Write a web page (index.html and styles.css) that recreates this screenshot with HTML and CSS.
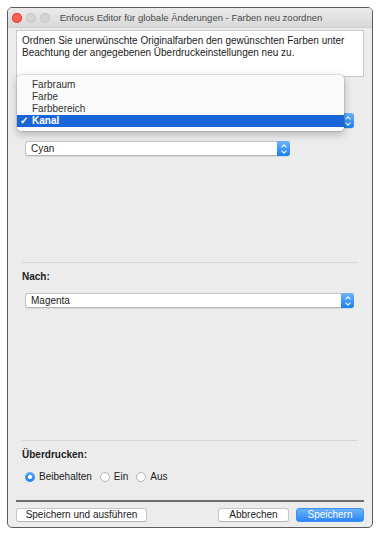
FILE: index.html
```html
<!DOCTYPE html>
<html lang="de">
<head>
  <meta charset="UTF-8" />
  <title>Farben neu zuordnen</title>
  <link rel="stylesheet" href="styles.css">
</head>
<body>
  <div class="window">
    <div class="titlebar">
      <div class="lights">
        <span class="light red"></span>
        <span class="light"></span>
        <span class="light"></span>
      </div>
      <div class="title">Enfocus Editor für globale Änderungen - Farben neu zoordnen</div>
    </div>

    <div class="content">
      <div class="desc">
        Ordnen Sie unerwünschte Originalfarben den gewünschten Farben unter
        Beachtung der angegebenen Überdruckeinstellungen neu zu.
      </div>

      <!-- label and current value sit under the open menu -->
      <div class="section from">
        <div class="label covered">Von:</div>
        <div class="popup wide"><span class="covered">Kanal</span><i class="arrows"></i></div>
        <div class="popup narrow"><span>Cyan</span><i class="arrows"></i></div>
      </div>

      <div class="section to">
        <div class="label">Nach:</div>
        <div class="popup wide"><span>Magenta</span><i class="arrows"></i></div>
      </div>

      <div class="section overprint">
        <div class="label">Überdrucken:</div>
        <div class="radios">
          <label class="radio checked"><i></i>Beibehalten</label>
          <label class="radio"><i></i>Ein</label>
          <label class="radio"><i></i>Aus</label>
        </div>
      </div>

      <div class="footer">
        <button class="btn">Speichern und ausführen</button>
        <div class="spacer"></div>
        <button class="btn cancel">Abbrechen</button>
        <button class="btn primary">Speichern</button>
      </div>
    </div>

    <ul class="menu">
      <li>Farbraum</li>
      <li>Farbe</li>
      <li>Farbbereich</li>
      <li class="selected">Kanal</li>
    </ul>
  </div>
</body>
</html>
```

FILE: styles.css
```css
* {
  box-sizing: border-box;
}
body {
  margin: 0;
  background: #fff;
  font-family: 'Liberation Sans', Arial, sans-serif;
  font-size: 10px;
  color: #222;
}
.window {
  position: relative;
  margin: 7px 0 0 7px;
  width: 366px;
  height: 521px;
  border: 1px solid #5c5c5c;
  border-radius: 5px;
  background: #ececec;
  overflow: hidden;
  display: flex;
  flex-direction: column;
}
.titlebar {
  height: 20px;
  flex: none;
  display: flex;
  align-items: center;
  background: linear-gradient(#ebebeb, #d8d8d8);
  border-bottom: 1px solid #d0d0d0;
}
.lights {
  display: flex;
  gap: 4px;
  padding-left: 4px;
  flex: none;
}
.light {
  width: 10px;
  height: 10px;
  border-radius: 50%;
  background: #d5d5d5;
  box-shadow: inset 0 0 0 1px #c6c6c6;
}
.light.red {
  background: #fc5f57;
  box-shadow: inset 0 0 0 1px #e0443e;
}
.title {
  flex: 1;
  text-align: center;
  font-size: 9.5px;
  white-space: nowrap;
  color: #4a4a4a;
  margin-right: 40px;
}
.content {
  flex: 1;
  display: flex;
  flex-direction: column;
  padding: 2px 8px 0;
}
.desc {
  height: 47px;
  flex: none;
  background: #fff;
  border: 1px solid #c9c9c9;
  padding: 4px 5px;
  line-height: 12px;
  color: #222;
}
.section {
  flex: none;
  display: flex;
  flex-direction: column;
}
.label {
  font-weight: bold;
  line-height: 12px;
}
.covered {
  visibility: hidden;
}
.from {
  height: 185px;
  padding-top: 12px;
}
.from .label {
  padding-left: 7px;
  margin-bottom: 12px;
}
.from .popup.narrow {
  margin-top: 13px;
}
.to {
  height: 178px;
  border-top: 1px solid #d8d8d8;
  margin: 0 6px;
  padding-top: 8px;
}
.to .popup {
  margin: 10px 4px 0 3px;
}
.overprint {
  height: 60px;
  border-top: 1px solid #d8d8d8;
  margin: 0 6px;
  padding-top: 8px;
}
.popup {
  height: 15px;
  background: #fff;
  border: 1px solid #c5c5c5;
  border-bottom-color: #b5b5b5;
  border-radius: 3px;
  display: flex;
  align-items: center;
  box-shadow: 0 0.5px 1px rgba(0, 0, 0, 0.08);
}
.popup span {
  flex: 1;
  padding-left: 5px;
}
.from .popup {
  margin-left: 9px;
}
.from .popup.wide {
  margin-right: 10px;
}
.popup.narrow {
  width: 265px;
}
.arrows {
  width: 13px;
  height: 15px;
  margin: -1px -1px -1px 0;
  border-radius: 0 3px 3px 0;
  background: linear-gradient(#6cb3fa, #1b7ff5);
  position: relative;
}
.arrows::before,
.arrows::after {
  content: "";
  position: absolute;
  left: 5px;
  width: 3px;
  height: 3px;
  border: solid #fff;
  border-width: 1px 0 0 1px;
}
.arrows::before {
  top: 3.5px;
  transform: rotate(45deg);
}
.arrows::after {
  top: 7.5px;
  transform: rotate(225deg);
}
.radios {
  display: flex;
  gap: 8px;
  margin-top: 10px;
  padding-left: 3px;
  line-height: 12px;
}
.radio {
  display: flex;
  align-items: center;
  gap: 4px;
}
.radio i {
  width: 10px;
  height: 10px;
  border-radius: 50%;
  background: #fff;
  border: 1px solid #b4b4b4;
}
.radio.checked i {
  border: none;
  background: radial-gradient(circle, #fff 0 1.8px, transparent 2.3px), linear-gradient(#5fa8f8, #1c7ff3);
}
.footer {
  flex: 1;
  border-top: 2px solid #6c6c6c;
  display: flex;
  align-items: flex-start;
  gap: 7px;
  padding-top: 6px;
}
.spacer {
  flex: 1;
}
.btn {
  font-family: inherit;
  font-size: 10px;
  height: 14px;
  padding: 0;
  background: #fff;
  border: 1px solid #c6c6c6;
  border-bottom-color: #b3b3b3;
  border-radius: 3px;
  color: #222;
  width: 131px;
  line-height: 12px;
}
.btn.cancel {
  width: 71px;
}
.btn.primary {
  width: 68px;
  color: #fff;
  border-color: #3c8ff5;
  background: linear-gradient(#6db2fa, #2b87f6);
}
.menu {
  position: absolute;
  left: 9px;
  top: 67px;
  width: 327px;
  margin: 0;
  padding: 4px 0;
  list-style: none;
  background: #fafafa;
  border-radius: 4px;
  box-shadow: 0 0 0 0.5px rgba(0, 0, 0, 0.2), 0 3px 8px rgba(0, 0, 0, 0.25);
}
.menu li {
  height: 12px;
  line-height: 12px;
  padding-left: 15px;
  color: #333;
}
.menu li.selected {
  background: #1966d9;
  color: #fff;
  font-weight: bold;
  position: relative;
}
.menu li.selected::before {
  content: "\2713";
  position: absolute;
  left: 3px;
  font-weight: bold;
}
```
